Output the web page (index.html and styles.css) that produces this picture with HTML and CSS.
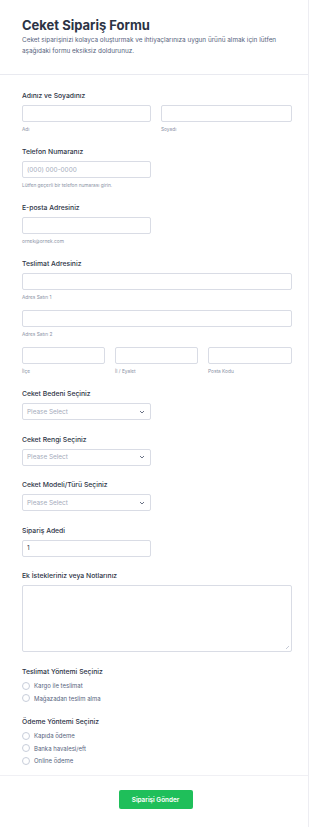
FILE: index.html
```html
<!DOCTYPE html>
<html lang="tr">
<head>
    <meta charset="UTF-8">
    <meta name="viewport" content="width=device-width, initial-scale=1.0">
    <title>Ceket Sipariş Formu</title>
    <link rel="stylesheet" href="styles.css">
</head>
<body>
    <div class="form-card">
        <div class="form-header">
            <h1>Ceket Sipariş Formu</h1>
            <p>Ceket siparişinizi kolayca oluşturmak ve ihtiyaçlarınıza uygun ürünü almak için lütfen aşağıdaki formu eksiksiz doldurunuz.</p>
        </div>

        <div class="form-body">
            <div class="field">
                <label class="field-label">Adınız ve Soyadınız</label>
                <div class="row-2">
                    <div>
                        <input type="text" class="input">
                        <span class="sublabel">Adı</span>
                    </div>
                    <div>
                        <input type="text" class="input">
                        <span class="sublabel">Soyadı</span>
                    </div>
                </div>
            </div>

            <div class="field">
                <label class="field-label">Telefon Numaranız</label>
                <input type="text" class="input short" placeholder="(000) 000-0000">
                <span class="sublabel">Lütfen geçerli bir telefon numarası girin.</span>
            </div>

            <div class="field">
                <label class="field-label">E-posta Adresiniz</label>
                <input type="text" class="input short">
                <span class="sublabel">ornek@ornek.com</span>
            </div>

            <div class="field">
                <label class="field-label">Teslimat Adresiniz</label>
                <input type="text" class="input">
                <span class="sublabel">Adres Satırı 1</span>
                <input type="text" class="input next">
                <span class="sublabel">Adres Satırı 2</span>
                <div class="row-3 next">
                    <div>
                        <input type="text" class="input">
                        <span class="sublabel">İlçe</span>
                    </div>
                    <div>
                        <input type="text" class="input">
                        <span class="sublabel">İl / Eyalet</span>
                    </div>
                    <div>
                        <input type="text" class="input">
                        <span class="sublabel">Posta Kodu</span>
                    </div>
                </div>
            </div>

            <div class="field plain">
                <label class="field-label">Ceket Bedeni Seçiniz</label>
                <div class="select short">
                    <span>Please Select</span>
                    <svg width="6" height="4" viewBox="0 0 6 4"><path d="M1 1l2 2 2-2" fill="none" stroke="#5a6378" stroke-width="0.9"/></svg>
                </div>
            </div>

            <div class="field plain">
                <label class="field-label">Ceket Rengi Seçiniz</label>
                <div class="select short">
                    <span>Please Select</span>
                    <svg width="6" height="4" viewBox="0 0 6 4"><path d="M1 1l2 2 2-2" fill="none" stroke="#5a6378" stroke-width="0.9"/></svg>
                </div>
            </div>

            <div class="field plain">
                <label class="field-label">Ceket Modeli/Türü Seçiniz</label>
                <div class="select short">
                    <span>Please Select</span>
                    <svg width="6" height="4" viewBox="0 0 6 4"><path d="M1 1l2 2 2-2" fill="none" stroke="#5a6378" stroke-width="0.9"/></svg>
                </div>
            </div>

            <div class="field plain">
                <label class="field-label">Sipariş Adedi</label>
                <input type="text" class="input short" value="1">
            </div>

            <div class="field plain">
                <label class="field-label">Ek İstekleriniz veya Notlarınız</label>
                <div class="textarea-wrap">
                    <textarea class="textarea"></textarea>
                </div>
            </div>

            <div class="field radios">
                <label class="field-label">Teslimat Yöntemi Seçiniz</label>
                <div class="radio-list">
                    <label class="radio"><span class="dot"></span>Kargo ile teslimat</label>
                    <label class="radio"><span class="dot"></span>Mağazadan teslim alma</label>
                </div>
            </div>

            <div class="field radios last">
                <label class="field-label">Ödeme Yöntemi Seçiniz</label>
                <div class="radio-list">
                    <label class="radio"><span class="dot"></span>Kapıda ödeme</label>
                    <label class="radio"><span class="dot"></span>Banka havalesi/eft</label>
                    <label class="radio"><span class="dot"></span>Online ödeme</label>
                </div>
            </div>
        </div>

        <div class="form-footer">
            <button class="submit-btn">Siparişi Gönder</button>
        </div>
    </div>
</body>
</html>
```

FILE: styles.css
```css
body {
    margin: 0;
    background-color: #ffffff;
    font-family: Inter, "Noto Sans", sans-serif;
    color: #2c3345;
}
.form-card {
    width: 308px;
    min-height: 827px;
    border-right: 1px solid #ededf2;
    background-color: white;
}
.form-header {
    padding: 17px 16px 17px 22px;
    border-bottom: 1px solid #e9eaf0;
}
.form-header h1 {
    margin: 0;
    font-size: 13px;
    font-weight: 700;
    line-height: 16px;
    color: #2c3345;
}
.form-header p {
    margin: 2px 0 0;
    font-size: 6.4px;
    line-height: 11px;
    color: #57647e;
}
.form-body {
    padding: 16px 16px 8px 22px;
    border-bottom: 1px solid #f0f0f4;
}
.field {
    margin-bottom: 14px;
}
.field.plain {
    margin-bottom: 14.5px;
}
.field.last {
    margin-bottom: 0;
}
.field-label {
    display: block;
    font-size: 6.8px;
    font-weight: 500;
    line-height: 10px;
    margin-bottom: 4px;
    color: #2c3345;
}
.input, .select, .textarea {
    display: block;
    box-sizing: border-box;
    width: 100%;
    height: 17px;
    margin: 0;
    padding: 0 4px;
    border: 1px solid #d9dce5;
    border-radius: 2px;
    background: white;
    font-family: Inter, "Noto Sans", sans-serif;
    font-size: 6.4px;
    color: #2c3345;
    outline: none;
}
.input::placeholder {
    color: #a4abbb;
}
.short {
    width: 129px;
}
.next {
    margin-top: 9px;
}
.sublabel {
    display: block;
    margin-top: 3px;
    font-size: 4.8px;
    line-height: 8px;
    color: #8a92a5;
}
.row-2 {
    display: grid;
    grid-template-columns: 129px 131px;
    gap: 10px;
}
.row-3 {
    display: grid;
    grid-template-columns: 83px 83px 84px;
    gap: 10px;
}
.select {
    display: flex;
    align-items: center;
    justify-content: space-between;
    padding: 0 5px 0 4px;
    color: #a4abbb;
    width: 129px;
}
.textarea-wrap {
    position: relative;
}
.textarea-wrap::after {
    content: "";
    position: absolute;
    right: 3px;
    bottom: 3px;
    width: 3px;
    height: 3px;
    background: linear-gradient(135deg, transparent 45%, #c5cad6 45%, #c5cad6 60%, transparent 60%);
}
.textarea {
    height: 67px;
    resize: none;
    padding: 4px;
}
.radio-list {
    margin-top: 3px;
}
.radios .field-label {
    margin-bottom: 0;
}
.radios {
    margin-bottom: 12px;
}
.radios.last {
    margin-bottom: 0;
}
.radio {
    display: flex;
    align-items: center;
    height: 12.5px;
    font-size: 6px;
    color: #57647e;
}
.dot {
    box-sizing: border-box;
    width: 8px;
    height: 8px;
    margin-right: 4px;
    border: 1px solid #c8ceda;
    border-radius: 50%;
    background: white;
}
.form-footer {
    display: flex;
    justify-content: center;
    padding: 14px 0 0 3px;
}
.submit-btn {
    width: 74px;
    height: 19px;
    padding: 0;
    border: none;
    border-radius: 2px;
    background-color: #1fbf5a;
    color: white;
    font-family: Inter, "Noto Sans", sans-serif;
    font-size: 6.4px;
    font-weight: 600;
    cursor: pointer;
}
```
